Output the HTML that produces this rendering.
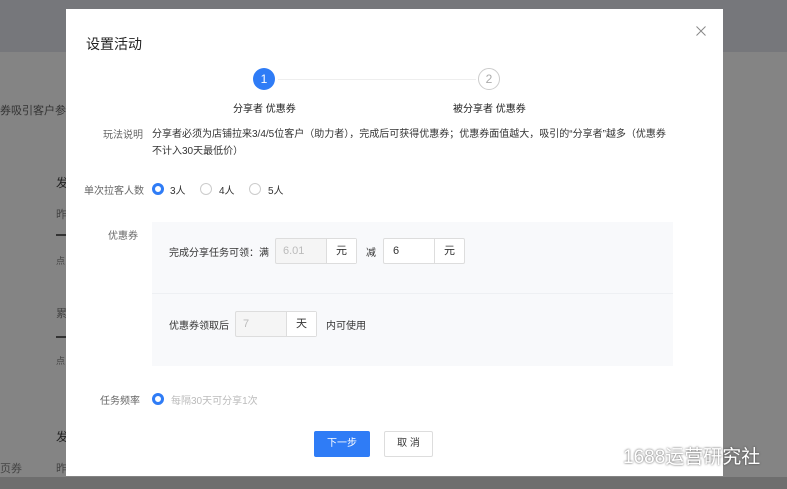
<!DOCTYPE html>
<html><head><meta charset="utf-8"><style>
*{margin:0;padding:0;box-sizing:border-box}
body{width:787px;height:489px;overflow:hidden;background:#848484;font-family:"Liberation Sans","Noto Sans CJK SC",sans-serif;position:relative;font-size:11px;color:#333}
.top{position:absolute;left:0;top:0;width:787px;height:52px;background:#76777b}
.bot{position:absolute;left:0;top:477px;width:787px;height:12px;background:#6e6e6e}
.bg{position:absolute;color:#444;font-size:11px}
.modal{position:absolute;left:66px;top:9px;width:657px;height:467px;background:#fff}
.a{position:absolute;white-space:nowrap}
.lbl{color:#666;font-size:10px}
.circ{position:absolute;width:22px;height:22px;border-radius:50%;text-align:center;line-height:22px;font-size:12px}
.radio{position:absolute;width:12px;height:12px;border-radius:50%;border:1px solid #ccc;background:#fff}
.radio.on{border:3px solid #2f7cf6;background:#fff}
.inp{position:absolute;height:26px;border:1px solid #ddd;border-radius:2px;display:flex;font-size:11px}
.inp span{display:block;line-height:24px}
</style></head><body>
<div class="top"></div>
<div class="bg" style="left:0;top:102px;color:#333">券吸引客户参与</div>
<div class="bg" style="left:56px;top:174px;font-size:12px;color:#222">发</div>
<div class="bg" style="left:56px;top:206px">昨</div>
<div class="bg" style="left:56px;top:234px;width:10px;border-top:2px solid #333"></div>
<div class="bg" style="left:56px;top:254px;font-size:9px">点</div>
<div class="bg" style="left:56px;top:305px">累</div>
<div class="bg" style="left:56px;top:336px;width:10px;border-top:2px solid #333"></div>
<div class="bg" style="left:56px;top:354px;font-size:9px">点</div>
<div class="bg" style="left:56px;top:428px;font-size:12px;color:#222">发</div>
<div class="bg" style="left:0;top:460px">页券</div>
<div class="bg" style="left:56px;top:460px">昨</div>
<div class="bot"></div>
<div class="modal">
<div class="a" style="left:20px;top:25px;font-size:14px;color:#222">设置活动</div>
<svg class="a" style="left:630px;top:17px" width="10" height="10"><path d="M0.5 0.5L9.5 9.5M9.5 0.5L0.5 9.5" stroke="#888" stroke-width="1"/></svg>
<div class="circ" style="left:187px;top:59px;background:#2f7cf6;color:#fff">1</div>
<div class="a" style="left:212px;top:70px;width:198px;border-top:1px solid #eee"></div>
<div class="circ" style="left:412px;top:59px;border:1px solid #ccc;color:#aaa;line-height:20px">2</div>
<div class="a" style="left:167px;top:91px;font-size:10px;color:#222">分享者 优惠券</div>
<div class="a" style="left:387px;top:91px;font-size:10px;color:#222">被分享者 优惠券</div>
<div class="a lbl" style="left:37px;top:117px">玩法说明</div>
<div class="a" style="left:86px;top:117px;font-size:10px;color:#333;line-height:17px">分享者必须为店铺拉来3/4/5位客户（助力者），完成后可获得优惠券；优惠券面值越大，吸引的“分享者”越多（优惠券<br>不计入30天最低价）</div>
<div class="a lbl" style="left:18px;top:173px">单次拉客人数</div>
<div class="radio on" style="left:86px;top:174px"></div><div class="a" style="left:104px;top:173px;font-size:10px">3人</div>
<div class="radio" style="left:134px;top:174px"></div><div class="a" style="left:153px;top:173px;font-size:10px">4人</div>
<div class="radio" style="left:183px;top:174px"></div><div class="a" style="left:202px;top:173px;font-size:10px">5人</div>
<div class="a lbl" style="left:42px;top:218px">优惠券</div>
<div class="a" style="left:86px;top:213px;width:521px;height:71px;background:#f8f9fb"></div>
<div class="a" style="left:86px;top:284px;width:521px;height:73px;background:#f8f9fb;border-top:1px solid #eef0f3"></div>
<div class="a" style="left:103px;top:235px;font-size:10px">完成分享任务可领：满</div>
<div class="inp" style="left:209px;top:229px;width:82px;background:#f5f5f5"><span style="width:51px;padding-left:7px;color:#bbb;border-right:1px solid #ddd">6.01</span><span style="flex:1;text-align:center;background:#fff">元</span></div>
<div class="a" style="left:300px;top:235px;font-size:10px">减</div>
<div class="inp" style="left:317px;top:229px;width:82px;background:#fff"><span style="width:51px;padding-left:9px;border-right:1px solid #ddd">6</span><span style="flex:1;text-align:center">元</span></div>
<div class="a" style="left:103px;top:308px;font-size:10px">优惠券领取后</div>
<div class="inp" style="left:169px;top:302px;width:82px;background:#f5f5f5"><span style="width:51px;padding-left:7px;color:#bbb;border-right:1px solid #ddd">7</span><span style="flex:1;text-align:center;background:#fff">天</span></div>
<div class="a" style="left:260px;top:308px;font-size:10px">内可使用</div>
<div class="a lbl" style="left:34px;top:383px">任务频率</div>
<div class="radio on" style="left:86px;top:384px"></div>
<div class="a" style="left:105px;top:383px;font-size:10px;color:#bbb">每隔30天可分享1次</div>
<div class="a" style="left:248px;top:422px;width:56px;height:26px;background:#2f7cf6;border-radius:2px;color:#fff;text-align:center;line-height:26px;font-size:10px">下一步</div>
<div class="a" style="left:318px;top:422px;width:49px;height:26px;border:1px solid #ddd;border-radius:2px;text-align:center;line-height:24px;font-size:10px">取 消</div>
</div>
<svg class="a" style="left:594px;top:443px" width="28" height="24"><g fill="none" stroke="#fff" stroke-width="1.5"><ellipse cx="10" cy="9" rx="8.5" ry="7"/><ellipse cx="18" cy="15" rx="7.5" ry="6"/></g></svg>
<div class="a" style="left:623px;top:442px;font-size:19px;color:#fff;text-shadow:0 0 2px #444">1688运营研究社</div>
</body></html>
